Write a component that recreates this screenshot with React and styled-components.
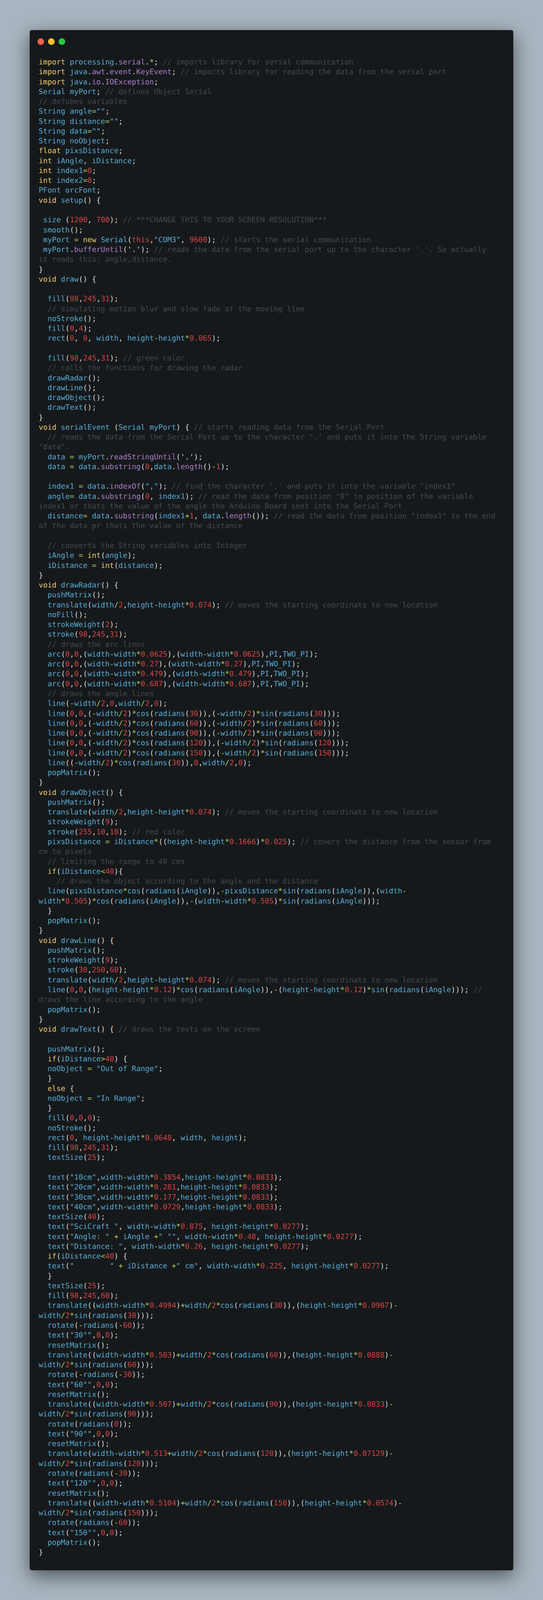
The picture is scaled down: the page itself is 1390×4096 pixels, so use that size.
import React from "react";
import styled, { createGlobalStyle } from "styled-components";

const Global = createGlobalStyle`
  html, body { margin: 0; padding: 0; background: #a8b4bf; }
`;

const Page = styled.main`
  box-sizing: border-box;
  width: 1390px;
  height: 4096px;
  padding: 77px 76px 76px;
  background: #a8b4bf;
  overflow: hidden;
`;

const Card = styled.section`
  box-sizing: border-box;
  height: 100%;
  display: flex;
  flex-direction: column;
  gap: 32px;
  padding: 21px 23px 0;
  background: #16191b;
  border-radius: 5px;
  box-shadow: 0 14px 49px rgba(0, 0, 0, 0.55);
`;

const TitleBar = styled.header`
  display: flex;
  gap: 10px;
  margin-left: -3px;
`;

const Dot = styled.span`
  width: 17px;
  height: 17px;
  border-radius: 50%;
  background: ${(p) => p.$color};
`;

const Code = styled.code`
  display: block;
  font-family: "DejaVu Sans Mono", monospace;
  font-size: 18.85px;
  line-height: 25.28px;
  text-rendering: geometricPrecision;
  color: #d8d8d8;
`;

const CodeLine = styled.div`
  height: 25.28px;
  white-space: pre;
`;

const COLORS = {
  keyword: "#e3c66e",
  ident: "#56a8cf",
  member: "#a67dc4",
  op: "#a8c95c",
  number: "#cb4346",
  comment: "#3d494f",
  plain: "#d8d8d8",
};

const Token = styled.span`
  color: ${(p) => COLORS[p.$kind]};
`;

const SOURCE = String.raw`import processing.serial.*; // imports library for serial communication
import java.awt.event.KeyEvent; // imports library for reading the data from the serial port
import java.io.IOException;
Serial myPort; // defines Object Serial
// defubes variables
String angle="";
String distance="";
String data="";
String noObject;
float pixsDistance;
int iAngle, iDistance;
int index1=0;
int index2=0;
PFont orcFont;
void setup() {

 size (1200, 700); // ***CHANGE THIS TO YOUR SCREEN RESOLUTION***
 smooth();
 myPort = new Serial(this,"COM3", 9600); // starts the serial communication
 myPort.bufferUntil('.'); // reads the data from the serial port up to the character '.'. So actually
~it reads this: angle,distance.
}
void draw() {

  fill(98,245,31);
  // simulating motion blur and slow fade of the moving line
  noStroke();
  fill(0,4);
  rect(0, 0, width, height-height*0.065);

  fill(98,245,31); // green color
  // calls the functions for drawing the radar
  drawRadar();
  drawLine();
  drawObject();
  drawText();
}
void serialEvent (Serial myPort) { // starts reading data from the Serial Port
  // reads the data from the Serial Port up to the character '.' and puts it into the String variable
~"data".
  data = myPort.readStringUntil('.');
  data = data.substring(0,data.length()-1);

  index1 = data.indexOf(","); // find the character ',' and puts it into the variable "index1"
  angle= data.substring(0, index1); // read the data from position "0" to position of the variable
~index1 or thats the value of the angle the Arduino Board sent into the Serial Port
  distance= data.substring(index1+1, data.length()); // read the data from position "index1" to the end
~of the data pr thats the value of the distance

  // converts the String variables into Integer
  iAngle = int(angle);
  iDistance = int(distance);
}
void drawRadar() {
  pushMatrix();
  translate(width/2,height-height*0.074); // moves the starting coordinats to new location
  noFill();
  strokeWeight(2);
  stroke(98,245,31);
  // draws the arc lines
  arc(0,0,(width-width*0.0625),(width-width*0.0625),PI,TWO_PI);
  arc(0,0,(width-width*0.27),(width-width*0.27),PI,TWO_PI);
  arc(0,0,(width-width*0.479),(width-width*0.479),PI,TWO_PI);
  arc(0,0,(width-width*0.687),(width-width*0.687),PI,TWO_PI);
  // draws the angle lines
  line(-width/2,0,width/2,0);
  line(0,0,(-width/2)*cos(radians(30)),(-width/2)*sin(radians(30)));
  line(0,0,(-width/2)*cos(radians(60)),(-width/2)*sin(radians(60)));
  line(0,0,(-width/2)*cos(radians(90)),(-width/2)*sin(radians(90)));
  line(0,0,(-width/2)*cos(radians(120)),(-width/2)*sin(radians(120)));
  line(0,0,(-width/2)*cos(radians(150)),(-width/2)*sin(radians(150)));
  line((-width/2)*cos(radians(30)),0,width/2,0);
  popMatrix();
}
void drawObject() {
  pushMatrix();
  translate(width/2,height-height*0.074); // moves the starting coordinats to new location
  strokeWeight(9);
  stroke(255,10,10); // red color
  pixsDistance = iDistance*((height-height*0.1666)*0.025); // covers the distance from the sensor from
~cm to pixels
  // limiting the range to 40 cms
  if(iDistance<40){
    // draws the object according to the angle and the distance
  line(pixsDistance*cos(radians(iAngle)),-pixsDistance*sin(radians(iAngle)),(width-
width*0.505)*cos(radians(iAngle)),-(width-width*0.505)*sin(radians(iAngle)));
  }
  popMatrix();
}
void drawLine() {
  pushMatrix();
  strokeWeight(9);
  stroke(30,250,60);
  translate(width/2,height-height*0.074); // moves the starting coordinats to new location
  line(0,0,(height-height*0.12)*cos(radians(iAngle)),-(height-height*0.12)*sin(radians(iAngle))); //
~draws the line according to the angle
  popMatrix();
}
void drawText() { // draws the texts on the screen

  pushMatrix();
  if(iDistance>40) {
  noObject = "Out of Range";
  }
  else {
  noObject = "In Range";
  }
  fill(0,0,0);
  noStroke();
  rect(0, height-height*0.0648, width, height);
  fill(98,245,31);
  textSize(25);

  text("10cm",width-width*0.3854,height-height*0.0833);
  text("20cm",width-width*0.281,height-height*0.0833);
  text("30cm",width-width*0.177,height-height*0.0833);
  text("40cm",width-width*0.0729,height-height*0.0833);
  textSize(40);
  text("SciCraft ", width-width*0.875, height-height*0.0277);
  text("Angle: " + iAngle +" °", width-width*0.48, height-height*0.0277);
  text("Distance: ", width-width*0.26, height-height*0.0277);
  if(iDistance<40) {
  text("        " + iDistance +" cm", width-width*0.225, height-height*0.0277);
  }
  textSize(25);
  fill(98,245,60);
  translate((width-width*0.4994)+width/2*cos(radians(30)),(height-height*0.0907)-
width/2*sin(radians(30)));
  rotate(-radians(-60));
  text("30°",0,0);
  resetMatrix();
  translate((width-width*0.503)+width/2*cos(radians(60)),(height-height*0.0888)-
width/2*sin(radians(60)));
  rotate(-radians(-30));
  text("60°",0,0);
  resetMatrix();
  translate((width-width*0.507)+width/2*cos(radians(90)),(height-height*0.0833)-
width/2*sin(radians(90)));
  rotate(radians(0));
  text("90°",0,0);
  resetMatrix();
  translate(width-width*0.513+width/2*cos(radians(120)),(height-height*0.07129)-
width/2*sin(radians(120)));
  rotate(radians(-30));
  text("120°",0,0);
  resetMatrix();
  translate((width-width*0.5104)+width/2*cos(radians(150)),(height-height*0.0574)-
width/2*sin(radians(150)));
  rotate(radians(-60));
  text("150°",0,0);
  popMatrix();
}`;

const KEYWORDS = new Set(["import", "void", "int", "float", "new", "if", "else"]);
const TOKEN_RE = /(\/\/.*$)|("[^"]*")|(\d+(?:\.\d+)?)|([A-Za-z_]\w*)|([*+\-\/=<>])|(\s+|.)/g;

function tokenize(line) {
  if (line.startsWith("~")) return [["comment", line.slice(1)]];
  const out = [];
  let afterDot = false;
  for (const m of line.matchAll(TOKEN_RE)) {
    let kind = "plain";
    if (m[1]) kind = "comment";
    else if (m[2]) kind = "ident";
    else if (m[3]) kind = "number";
    else if (m[4]) {
      if (afterDot) kind = "member";
      else if (m[4] === "this") kind = "number";
      else kind = KEYWORDS.has(m[4]) ? "keyword" : "ident";
    } else if (m[5]) kind = "op";
    afterDot = m[0] === ".";
    out.push([kind, m[0]]);
  }
  return out;
}

const LINES = SOURCE.split("\n").map(tokenize);

export default function App() {
  return (
    <Page>
      <Global />
      <Card>
        <TitleBar>
          <Dot $color="#ff5f56" />
          <Dot $color="#ffbd2e" />
          <Dot $color="#27c93f" />
        </TitleBar>
        <Code>
          {LINES.map((tokens, i) => (
            <CodeLine key={i}>
              {tokens.map(([kind, text], j) => (
                <Token key={j} $kind={kind}>
                  {text}
                </Token>
              ))}
            </CodeLine>
          ))}
        </Code>
      </Card>
    </Page>
  );
}
